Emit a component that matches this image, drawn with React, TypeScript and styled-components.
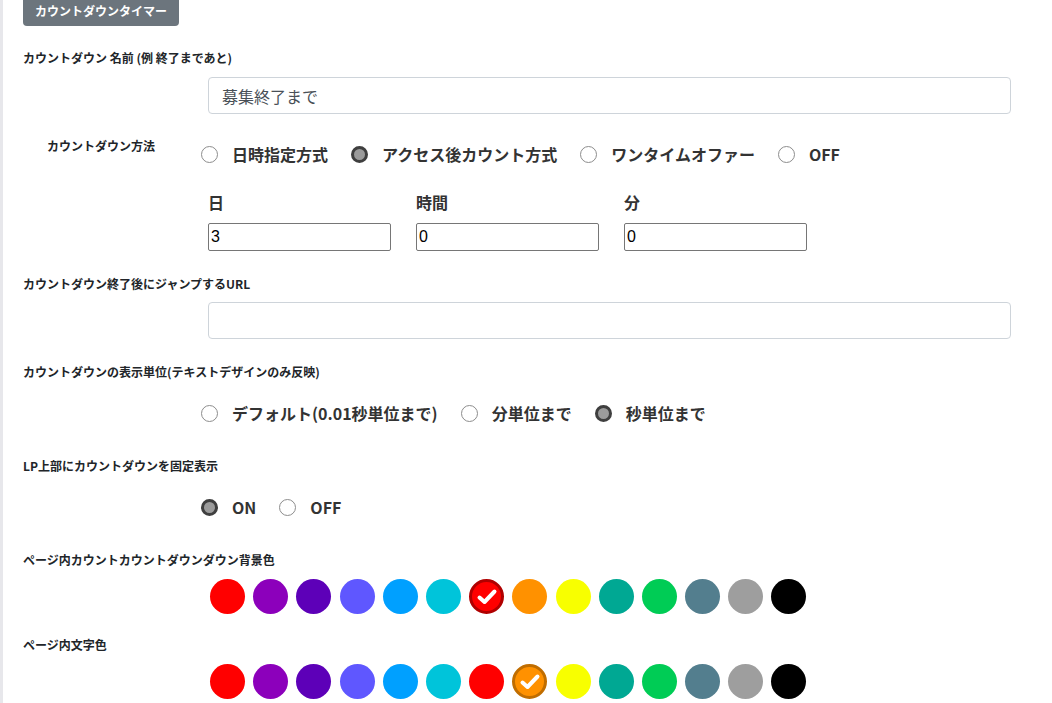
import React, { useState } from 'react';
import styled, { createGlobalStyle } from 'styled-components';

const GlobalStyle = createGlobalStyle`
  html, body {
    margin: 0;
    padding: 0;
    background: #fff;
  }
  body {
    font-family: "Noto Sans CJK JP", "Noto Sans", sans-serif;
    color: #212529;
    overflow: hidden;
  }
`;

const Page = styled.div`
  border-left: 3px solid #e7e7eb;
  padding: 0 41px 0 20px;
  min-height: 703px;
  box-sizing: border-box;
  overflow: hidden;
`;

const TitleButton = styled.div`
  display: flex;
  align-items: center;
  justify-content: center;
  width: fit-content;
  margin-top: -6px;
  height: 32px;
  padding: 0 12px;
  box-sizing: border-box;
  background: #6c757d;
  color: #fff;
  font-size: 12px;
  font-weight: 700;
  white-space: nowrap;
  border-radius: 4px;
`;

const Label = styled.div<{ $top: number }>`
  margin-top: ${(p) => p.$top}px;
  font-size: 12px;
  line-height: 18px;
  font-weight: 700;
  color: #212529;
`;

const Indent = styled.div<{ $gap: number; $left?: number }>`
  margin-top: ${(p) => p.$gap}px;
  margin-left: ${(p) => p.$left ?? 185}px;
`;

const TextField = styled.input`
  display: block;
  width: 100%;
  height: 37px;
  box-sizing: border-box;
  border: 1px solid #ced4da;
  border-radius: 4px;
  padding: 0 13px;
  font-family: inherit;
  font-size: 16px;
  color: #495057;
  outline: none;
`;

const MethodRow = styled.div`
  display: flex;
  align-items: flex-start;
  margin-top: 23px;
`;

const MethodLabel = styled.div`
  width: 178px;
  flex: none;
  box-sizing: border-box;
  padding-left: 24px;
  font-size: 12px;
  line-height: 18px;
  font-weight: 700;
`;

const RadioGroup = styled.div<{ $top?: number }>`
  display: flex;
  align-items: center;
  gap: 23px;
  padding-top: ${(p) => p.$top ?? 0}px;
`;

const RadioItem = styled.label`
  display: flex;
  align-items: center;
  gap: 14px;
  height: 24px;
  font-size: 16px;
  font-weight: 700;
  color: #333;
  white-space: nowrap;
  cursor: pointer;
`;

const RadioDot = styled.span<{ $on: boolean }>`
  width: 17px;
  height: 17px;
  box-sizing: border-box;
  border-radius: 50%;
  border: ${(p) => (p.$on ? '3px solid #3f3f3f' : '1px solid #8d8d8d')};
  background: ${(p) => (p.$on ? '#9b9b9b' : '#fff')};
  flex: none;
`;

const UnitGrid = styled.div`
  display: grid;
  grid-template-columns: repeat(3, 183px);
  column-gap: 25px;
  row-gap: 9px;
  margin-top: 24px;
  margin-left: 185px;
`;

const UnitLabel = styled.div`
  font-size: 16px;
  line-height: 24px;
  font-weight: 700;
  color: #333;
`;

const NumberField = styled.input`
  width: 100%;
  height: 28px;
  box-sizing: border-box;
  border: 1px solid #767676;
  border-radius: 2px;
  padding: 0 2px;
  font-family: "Liberation Sans", "Noto Sans", sans-serif;
  font-size: 16px;
  color: #000;
  outline: none;
`;

const SwatchRow = styled.div`
  display: flex;
  gap: 8.2px;
  margin-top: 10px;
  margin-left: 187px;
`;

const Swatch = styled.button<{ $color: string; $ring: string; $on: boolean }>`
  width: 35px;
  height: 35px;
  padding: 0;
  border-radius: 50%;
  box-sizing: border-box;
  background: ${(p) => p.$color};
  border: ${(p) => (p.$on ? `3px solid ${p.$ring}` : 'none')};
  display: flex;
  align-items: center;
  justify-content: center;
  cursor: pointer;
  flex: none;
`;

const palette = [
  { color: '#ff0000', ring: '#b00000' },
  { color: '#8c00bb', ring: '#5e007d' },
  { color: '#5d00b8', ring: '#3d0079' },
  { color: '#5f57ff', ring: '#3c35b0' },
  { color: '#00a0ff', ring: '#0070b0' },
  { color: '#00c4da', ring: '#00889a' },
  { color: '#ff0000', ring: '#b00000' },
  { color: '#ff9100', ring: '#c06d00' },
  { color: '#f8ff00', ring: '#b0b400' },
  { color: '#00a893', ring: '#007566' },
  { color: '#00cc55', ring: '#008f3b' },
  { color: '#537e8e', ring: '#385663' },
  { color: '#9e9e9e', ring: '#6e6e6e' },
  { color: '#000000', ring: '#444444' }
];

function Check (): React.ReactElement {
  return (
    <svg width='22' height='18' viewBox='0 0 22 18'>
      <polyline points='3.5,9.5 8.5,14 18.5,3.5' fill='none' stroke='#fff' strokeWidth='4' strokeLinecap='round' strokeLinejoin='round' />
    </svg>
  );
}

interface RadiosProps {
  options: string[];
  value: number;
  onChange: (i: number) => void;
  top?: number;
}

function Radios ({ options, value, onChange, top }: RadiosProps): React.ReactElement {
  return (
    <RadioGroup $top={top}>
      {options.map((o, i) => (
        <RadioItem key={o} onClick={() => onChange(i)}>
          <RadioDot $on={value === i} />
          {o}
        </RadioItem>
      ))}
    </RadioGroup>
  );
}

function Palette ({ value, onChange }: { value: number; onChange: (i: number) => void }): React.ReactElement {
  return (
    <SwatchRow>
      {palette.map((p, i) => (
        <Swatch key={i} $color={p.color} $ring={p.ring} $on={value === i} onClick={() => onChange(i)}>
          {value === i && <Check />}
        </Swatch>
      ))}
    </SwatchRow>
  );
}

export default function App (): React.ReactElement {
  const [method, setMethod] = useState(1);
  const [unit, setUnit] = useState(2);
  const [fixed, setFixed] = useState(0);
  const [bg, setBg] = useState(6);
  const [fg, setFg] = useState(7);

  return (
    <>
      <GlobalStyle />
      <Page>
        <TitleButton>カウントダウンタイマー</TitleButton>

        <Label $top={23}>カウントダウン 名前 (例 終了まであと)</Label>
        <Indent $gap={10}>
          <TextField defaultValue='募集終了まで' />
        </Indent>

        <MethodRow>
          <MethodLabel>カウントダウン方法</MethodLabel>
          <Radios
            options={['日時指定方式', 'アクセス後カウント方式', 'ワンタイムオファー', 'OFF']}
            value={method}
            onChange={setMethod}
            top={5}
          />
        </MethodRow>

        <UnitGrid>
          <UnitLabel>日</UnitLabel>
          <UnitLabel>時間</UnitLabel>
          <UnitLabel>分</UnitLabel>
          <NumberField defaultValue='3' />
          <NumberField defaultValue='0' />
          <NumberField defaultValue='0' />
        </UnitGrid>

        <Label $top={24}>カウントダウン終了後にジャンプするURL</Label>
        <Indent $gap={9}>
          <TextField defaultValue='' />
        </Indent>

        <Label $top={24}>カウントダウンの表示単位(テキストデザインのみ反映)</Label>
        <Indent $gap={20} $left={178}>
          <Radios
            options={['デフォルト(0.01秒単位まで)', '分単位まで', '秒単位まで']}
            value={unit}
            onChange={setUnit}
          />
        </Indent>

        <Label $top={32}>LP上部にカウントダウンを固定表示</Label>
        <Indent $gap={20} $left={178}>
          <Radios options={['ON', 'OFF']} value={fixed} onChange={setFixed} />
        </Indent>

        <Label $top={32}>ページ内カウントカウントダウンダウン背景色</Label>
        <Palette value={bg} onChange={setBg} />

        <Label $top={22}>ページ内文字色</Label>
        <Palette value={fg} onChange={setFg} />
      </Page>
    </>
  );
}
